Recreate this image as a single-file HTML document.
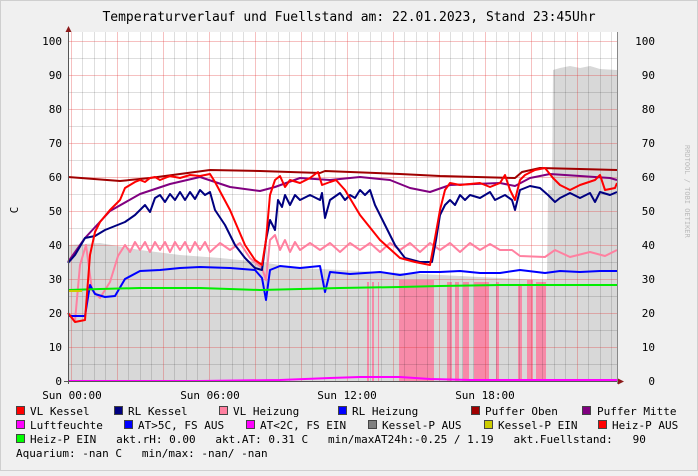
<!DOCTYPE html>
<html><head><meta charset="utf-8"><style>
html,body{margin:0;padding:0}
body{width:698px;height:471px;background:#f0f0f0;overflow:hidden}
svg text{font-family:"DejaVu Sans Mono","Liberation Mono",monospace;font-size:11px;fill:#000}
</style></head><body>
<svg width="698" height="471" xmlns="http://www.w3.org/2000/svg">
<rect x="0.5" y="0.5" width="697" height="470" fill="#f0f0f0" stroke="#cfcfcf"/>
<text x="349" y="21" text-anchor="middle" style="font-size:13px">Temperaturverlauf und Fuellstand am: 22.01.2023, Stand 23:45Uhr</text>
<text transform="translate(685,145) rotate(90)" style="font-size:7px;fill:#bbb">RRDTOOL / TOBI OETIKER</text>
<text transform="translate(18,210) rotate(-90)" text-anchor="middle">C</text>
<rect x="68" y="32" width="549" height="349" fill="#fff"/>
<!-- gray fill -->
<polygon fill="#d8d8d8" points="68,381 68,245 100,243 140,250 180,255 220,258 260,262 300,268 340,270 380,272 420,274 460,276 500,278 540,280 547,280 548,190 552,190 553,70 560,68 570,66 580,68 590,66 600,69 617,70 617,381"/>
<!-- pink bars -->
<g fill="#f78aa8">
<rect x="367" y="282" width="2" height="99"/><rect x="372" y="282" width="2" height="99"/><rect x="378" y="282" width="1" height="99"/>
<rect x="399" y="280" width="35" height="101"/>
<rect x="447" y="282" width="5" height="99"/><rect x="455" y="282" width="4" height="99"/><rect x="463" y="282" width="6" height="99"/>
<rect x="474" y="282" width="15" height="99"/><rect x="496" y="282" width="3" height="99"/><rect x="518" y="285" width="4" height="96"/><rect x="527" y="280" width="6" height="101"/><rect x="536" y="282" width="10" height="99"/>
</g>
<!-- grid -->
<g stroke="#000" stroke-opacity="0.13" stroke-width="1">
<path d="M82.5 32V381M94.5 32V381M105.5 32V381M128.5 32V381M140.5 32V381M151.5 32V381M174.5 32V381M186.5 32V381M197.5 32V381M220.5 32V381M232.5 32V381M243.5 32V381M266.5 32V381M278.5 32V381M289.5 32V381M312.5 32V381M324.5 32V381M335.5 32V381M358.5 32V381M370.5 32V381M381.5 32V381M404.5 32V381M416.5 32V381M427.5 32V381M450.5 32V381M462.5 32V381M473.5 32V381M496.5 32V381M508.5 32V381M519.5 32V381M542.5 32V381M554.5 32V381M565.5 32V381M588.5 32V381M600.5 32V381M611.5 32V381"/>
<path d="M68 364.5H617M68 330.5H617M68 296.5H617M68 262.5H617M68 228.5H617M68 194.5H617M68 160.5H617M68 126.5H617M68 92.5H617M68 58.5H617"/>
</g>
<g stroke="#e03030" stroke-opacity="0.3" stroke-width="1">
<path d="M71.5 32V381M117.5 32V381M163.5 32V381M209.5 32V381M255.5 32V381M301.5 32V381M347.5 32V381M393.5 32V381M439.5 32V381M485.5 32V381M531.5 32V381M577.5 32V381"/>
<path d="M68 347.5H617M68 313.5H617M68 279.5H617M68 245.5H617M68 211.5H617M68 177.5H617M68 143.5H617M68 109.5H617M68 75.5H617M68 41.5H617"/>
</g>
<g fill="none" stroke-width="2" stroke-linejoin="round">
<!-- puffer oben -->
<polyline stroke="#a00000" points="68,177 120,181 150,178 210,170 260,171 320,173 325,171 400,174 440,176 515,178 522,172 540,168 580,169 617,170"/>
<!-- puffer mitte -->
<polyline stroke="#800080" points="68,262 85,238 110,211 140,194 170,184 200,177 215,182 230,187 260,191 275,187 300,178 330,180 360,177 390,180 410,188 430,192 450,185 500,183 515,186 530,178 550,174 580,176 610,178 617,180"/>
<!-- VL Heizung -->
<polyline stroke="#ff80a0" points="68,313 75,321 80,265 86,245 92,290 100,298 110,282 118,256 125,245 130,252 135,242 140,250 145,242 150,252 155,242 160,250 165,242 170,252 175,242 180,250 185,242 190,252 195,242 200,250 205,242 210,252 220,243 230,250 240,243 250,258 262,268 266,280 270,240 275,235 280,250 285,240 290,252 295,242 300,250 310,243 320,250 330,243 340,252 350,243 360,250 370,243 380,252 390,243 400,250 410,243 420,252 430,243 440,250 450,243 460,252 470,243 480,250 490,244 500,250 512,250 520,256 545,257 555,250 570,257 590,252 605,256 617,250"/>
<!-- RL Heizung -->
<polyline stroke="#0000ff" points="68,316 85,316 90,285 95,294 105,297 115,296 125,279 140,271 160,270 180,268 200,267 230,268 255,270 262,278 266,300 270,270 280,266 300,268 320,266 325,292 330,272 350,274 380,272 400,275 420,272 440,272 460,271 480,273 500,273 520,270 545,273 560,271 580,272 600,271 617,271"/>
<!-- green -->
<polyline stroke="#00ee00" points="68,290 100,289 140,288 200,288 260,290 300,289 340,288 400,287 440,286 500,285 617,285"/>
<!-- yellow -->
<polyline stroke="#cccc00" points="68,291 82,291"/>
<!-- RL Kessel -->
<polyline stroke="#000080" points="68,263 75,255 85,238 95,236 105,230 115,226 125,222 135,215 145,205 150,212 155,198 160,195 165,202 170,194 175,200 180,192 185,200 190,192 195,199 200,190 205,195 210,192 215,210 225,225 235,245 245,258 255,268 262,270 266,240 270,220 275,230 278,200 282,207 285,195 290,205 295,195 300,200 310,195 320,200 322,193 325,218 330,200 340,193 345,200 350,195 355,198 360,190 365,195 370,190 375,205 385,225 395,245 405,258 420,262 432,262 436,240 440,215 445,205 450,200 455,205 460,195 465,200 470,195 480,198 490,192 495,200 505,195 512,200 515,210 520,190 530,186 540,188 548,195 555,202 560,198 570,193 580,198 590,193 595,202 600,192 610,195 617,192"/>
<!-- VL Kessel -->
<polyline stroke="#ff0000" points="68,313 75,322 85,320 90,255 95,232 100,222 110,210 120,200 125,188 130,185 135,182 140,180 145,182 150,178 155,177 160,180 170,176 180,178 190,175 200,176 210,174 215,182 230,210 245,245 255,260 262,265 266,240 270,195 275,180 280,176 285,187 290,180 300,183 310,178 318,172 322,185 330,182 336,180 345,190 360,215 380,240 400,258 415,262 430,265 435,238 440,210 445,190 450,183 460,185 480,183 490,187 500,183 505,175 510,190 515,200 520,180 525,175 535,170 545,168 553,178 560,185 570,190 580,185 595,180 600,175 605,190 615,188 617,183"/>
<!-- magenta -->
<polyline stroke="#ff00ff" points="68,381 200,381 280,380 330,378 360,377 400,377 430,379 470,380 617,380"/>
</g>
<!-- axes -->
<path d="M68.5 28V384" stroke="#555" stroke-width="1"/>
<polygon points="65.5,32 71.5,32 68.5,26" fill="#8b1a1a"/>
<path d="M64 381.5H620" stroke="#555" stroke-width="1"/>
<polygon points="618,378.5 618,384.5 624,381.5" fill="#8b1a1a"/>
<path d="M617.5 32V384" stroke="#888" stroke-width="1"/>
<!-- y labels -->
<g text-anchor="end">
<text x="62" y="385">0</text><text x="62" y="351">10</text><text x="62" y="317">20</text><text x="62" y="283">30</text><text x="62" y="249">40</text><text x="62" y="215">50</text><text x="62" y="181">60</text><text x="62" y="147">70</text><text x="62" y="113">80</text><text x="62" y="79">90</text><text x="62" y="45">100</text>
<text x="655" y="385">0</text><text x="655" y="351">10</text><text x="655" y="317">20</text><text x="655" y="283">30</text><text x="655" y="249">40</text><text x="655" y="215">50</text><text x="655" y="181">60</text><text x="655" y="147">70</text><text x="655" y="113">80</text><text x="655" y="79">90</text><text x="655" y="45">100</text>
</g>
<g text-anchor="middle">
<text x="72" y="399">Sun 00:00</text><text x="210" y="399">Sun 06:00</text><text x="347" y="399">Sun 12:00</text><text x="485" y="399">Sun 18:00</text>
</g>
<!-- legend -->
<g stroke="#444" stroke-width="1">
<rect x="16.5" y="406.5" width="8" height="8" fill="#ff0000"/>
<rect x="114.5" y="406.5" width="8" height="8" fill="#000080"/>
<rect x="219.5" y="406.5" width="8" height="8" fill="#ff80a0"/>
<rect x="338.5" y="406.5" width="8" height="8" fill="#0000ff"/>
<rect x="471.5" y="406.5" width="8" height="8" fill="#a00000"/>
<rect x="582.5" y="406.5" width="8" height="8" fill="#800080"/>
<rect x="16.5" y="420.5" width="8" height="8" fill="#ff00ff"/>
<rect x="124.5" y="420.5" width="8" height="8" fill="#0000ff"/>
<rect x="246.5" y="420.5" width="8" height="8" fill="#ff00ff"/>
<rect x="368.5" y="420.5" width="8" height="8" fill="#808080"/>
<rect x="484.5" y="420.5" width="8" height="8" fill="#cccc00"/>
<rect x="598.5" y="420.5" width="8" height="8" fill="#ff0000"/>
<rect x="16.5" y="434.5" width="8" height="8" fill="#00ff00"/>
</g>
<text x="30" y="415">VL Kessel</text>
<text x="128" y="415">RL Kessel</text>
<text x="233" y="415">VL Heizung</text>
<text x="352" y="415">RL Heizung</text>
<text x="485" y="415">Puffer Oben</text>
<text x="597" y="415">Puffer Mitte</text>
<text x="30" y="429">Luftfeuchte</text>
<text x="138" y="429">AT&gt;5C, FS AUS</text>
<text x="260" y="429">AT&lt;2C, FS EIN</text>
<text x="382" y="429">Kessel-P AUS</text>
<text x="498" y="429">Kessel-P EIN</text>
<text x="612" y="429">Heiz-P AUS</text>
<text x="30" y="443" xml:space="preserve">Heiz-P EIN   akt.rH: 0.00   akt.AT: 0.31 C   min/maxAT24h:-0.25 / 1.19   akt.Fuellstand:   90</text>
<text x="16" y="457" xml:space="preserve">Aquarium: -nan C   min/max: -nan/ -nan</text>
</svg>
</body></html>
